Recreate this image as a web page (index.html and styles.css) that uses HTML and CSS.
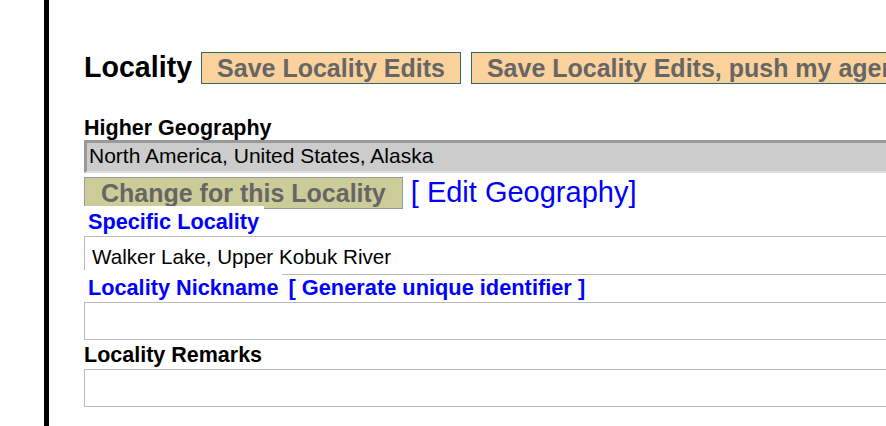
FILE: index.html
```html
<!DOCTYPE html>
<html lang="en">
<head>
  <meta charset="UTF-8">
  <title>Edit Locality</title>
  <link rel="stylesheet" href="styles.css">
</head>
<body>
  <div class="page">
    <div class="title-row">
      <h2>Locality</h2>
      <button class="save-btn">Save Locality Edits</button>
      <button class="save-btn save-push">Save Locality Edits, push my agent to georeference verifier</button>
    </div>

    <label class="field-label geog-label" for="higherGeog">Higher Geography</label>
    <input type="text" id="higherGeog" class="geog-input" value="North America, United States, Alaska" readonly>

    <div class="change-row">
      <button class="change-btn">Change for this Locality</button>
      <a class="edit-link" href="#">[ Edit Geography]</a>
    </div>

    <label class="field-label blue-label boxed spec-label" for="specLocality">Specific Locality</label>
    <input type="text" id="specLocality" class="text-input spec-input" value="Walker Lake, Upper Kobuk River">

    <div class="nick-row">
      <label class="field-label blue-label boxed" for="nickname">Locality Nickname</label>
      <a class="gen-link" href="#">[ Generate unique identifier ]</a>
    </div>
    <input type="text" id="nickname" class="text-input">

    <label class="field-label remarks-label" for="remarks">Locality Remarks</label>
    <input type="text" id="remarks" class="text-input">
  </div>
</body>
</html>
```

FILE: styles.css
```css
body {
  margin: 0;
  font-family: 'Liberation Sans', Arial, sans-serif;
  background-color: #fff;
  overflow: hidden;
}

.page {
  margin-left: 44px;
  border-left: 5px solid #000;
  padding: 51px 0 0 35px;
  min-height: 100vh;
  box-sizing: border-box;
  display: flex;
  flex-direction: column;
  align-items: flex-start;
  overflow: hidden;
}

.title-row {
  display: flex;
  align-items: baseline;
  white-space: nowrap;
}

.title-row h2 {
  margin: 0;
  font-size: 28.6px;
  line-height: 32px;
  font-weight: bold;
  color: #000;
}

.save-btn {
  flex-shrink: 0;
  margin-left: 9px;
  padding: 1px 15px;
  font-family: inherit;
  font-size: 25px;
  font-weight: bold;
  line-height: 28px;
  color: #666;
  background-color: #fbd29c;
  border: 1px solid #336666;
  border-radius: 0;
}

.save-push {
  margin-left: 10px;
}

.field-label {
  font-size: 21.5px;
  font-weight: bold;
  line-height: 24px;
  color: #000;
}

.blue-label {
  color: #00f;
  font-size: 21.7px;
}

.boxed {
  background-color: #fff;
  padding: 4px 5px 0 4px;
}

.geog-label {
  margin-top: 32px;
}

.geog-input {
  width: 860px;
  height: 33px;
  box-sizing: border-box;
  margin: 0;
  padding: 1px 2px 3px;
  font-family: inherit;
  font-size: 21px;
  line-height: 24px;
  color: #000;
  background-color: #ccc;
  border-style: solid;
  border-width: 3px 2px 2px 3px;
  border-color: #999 #ddd #ddd #999;
  outline: none;
}

.change-row {
  display: flex;
  align-items: baseline;
  gap: 8px;
  margin-top: 4px;
}

.change-btn {
  padding: 1px 16px 1px 16px;
  font-family: inherit;
  font-size: 25px;
  font-weight: bold;
  line-height: 28px;
  color: #666;
  background-color: #cccc99;
  border: 1px solid #999;
  border-radius: 0;
}

.edit-link {
  font-size: 29px;
  line-height: 28px;
  color: #00f;
  text-decoration: none;
}

.spec-label {
  margin-top: -3px;
}

.text-input {
  width: 860px;
  height: 38px;
  box-sizing: border-box;
  margin: 2px 0 0;
  padding: 7px 7px 5px;
  font-family: inherit;
  font-size: 20.6px;
  line-height: 24px;
  color: #000;
  background-color: #fff;
  border: 1px solid #bbb;
  outline: none;
}

.spec-input {
  height: 39px;
}

.nick-row {
  display: flex;
  align-items: baseline;
  gap: 6px;
  margin-top: -5px;
}

.nick-row .boxed {
  padding: 6px 4px 0 4px;
}

.gen-link {
  font-size: 21.8px;
  font-weight: bold;
  line-height: 24px;
  color: #00f;
  text-decoration: none;
}

.remarks-label {
  margin-top: 3px;
}
```
